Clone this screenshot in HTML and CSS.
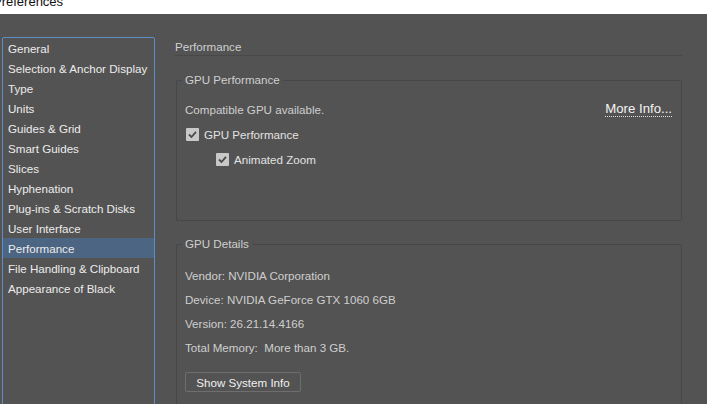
FILE: index.html
```html
<!DOCTYPE HTML>
<html>
    <head>
    <title>Preferences</title>
    <link rel="stylesheet" href="styles.css">
    </head>
    <body>
        <div class="titlebar"><span class="title">Preferences</span></div>

        <div class="window">
            <ul class="sidebar">
                <li>General</li>
                <li>Selection &amp; Anchor Display</li>
                <li>Type</li>
                <li>Units</li>
                <li>Guides &amp; Grid</li>
                <li>Smart Guides</li>
                <li>Slices</li>
                <li>Hyphenation</li>
                <li>Plug-ins &amp; Scratch Disks</li>
                <li>User Interface</li>
                <li class="selected">Performance</li>
                <li>File Handling &amp; Clipboard</li>
                <li>Appearance of Black</li>
            </ul>

            <div class="panel">
                <div class="heading">Performance</div>

                <fieldset class="group group-perf">
                    <legend>GPU Performance</legend>
                    <div class="row">
                        <span>Compatible GPU available.</span>
                        <a class="more">More Info...</a>
                    </div>
                    <label class="row check">
                        <span class="box"><svg width="13" height="13" viewBox="0 0 13 13"><path d="M3 6.5 L5.5 9 L10 3.8" fill="none" stroke="#4a4a4a" stroke-width="1.8"/></svg></span>
                        GPU Performance
                    </label>
                    <label class="row check sub">
                        <span class="box"><svg width="13" height="13" viewBox="0 0 13 13"><path d="M3 6.5 L5.5 9 L10 3.8" fill="none" stroke="#4a4a4a" stroke-width="1.8"/></svg></span>
                        Animated Zoom
                    </label>
                </fieldset>

                <fieldset class="group group-details">
                    <legend>GPU Details</legend>
                    <div class="line">Vendor: NVIDIA Corporation</div>
                    <div class="line">Device: NVIDIA GeForce GTX 1060 6GB</div>
                    <div class="line">Version: 26.21.14.4166</div>
                    <div class="line">Total Memory:&nbsp; More than 3 GB.</div>
                    <button type="button">Show System Info</button>
                </fieldset>
            </div>
        </div>
    </body>
</html>
```

FILE: styles.css
```css
 html, body {
     margin: 0;
     padding: 0;
     height: 404px;
     overflow: hidden;
     background: #535353;
     font-family: "Liberation Sans", Arial, sans-serif;
     font-size: 11.6px;
 }

 .titlebar {
     height: 14px;
     background: #fff;
     overflow: hidden;
 }

 .title {
     display: block;
     margin: -5px 0 0 -7px;
     font-size: 13px;
     line-height: 14px;
     color: #111;
 }

 .window {
     display: flex;
     height: 420px;
     padding-top: 23px;
 }

 .sidebar {
     list-style: none;
     margin: 0 0 0 2px;
     padding: 0;
     width: 151px;
     border: 1px solid #5e8ec6;
     border-radius: 2px;
     color: #ececec;
 }

 .sidebar li {
     height: 20px;
     line-height: 21px;
     padding-left: 5px;
     white-space: nowrap;
 }

 .sidebar li.selected {
     background: #4c6583;
 }

 .panel {
     margin-left: 20px;
     width: 507px;
     color: #cfcfcf;
 }

 .heading {
     margin-top: 2px;
     line-height: 16px;
     border-bottom: 1px solid #484848;
 }

 .group {
     margin: 16px 0 0 1px;
     padding: 9px 9px 0 8px;
     border: 1px solid #474747;
     border-radius: 2px;
 }

 .group legend {
     padding: 0 3px;
     margin-left: -3px;
     line-height: 16px;
 }

 .group-perf {
     height: 138px;
 }

 .row {
     display: flex;
     align-items: center;
     height: 25px;
 }

 .row .more {
     margin-left: auto;
     color: #f4f4f4;
     font-size: 13.2px;
     border-bottom: 1px dotted #e0e0e0;
     line-height: 14px;
 }

 .check {
     color: #e2e2e2;
 }

 .check .box {
     display: inline-block;
     width: 13px;
     height: 13px;
     margin: 0 5px 0 1px;
     background: #c8c8c8;
     border-radius: 1px;
 }

 .check .box svg {
     display: block;
 }

 .sub {
     padding-left: 30px;
 }

 .group-details {
     margin-top: 15px;
     padding-top: 12px;
     height: 200px;
 }

 .line {
     height: 24px;
     line-height: 24px;
 }

 button {
     margin-top: 12px;
     width: 116px;
     height: 20px;
     padding: 0;
     background: #535353;
     border: 1px solid #6e6e6e;
     border-radius: 2px;
     color: #f0f0f0;
     font-family: "Liberation Sans", Arial, sans-serif;
     font-size: 11.6px;
 }
```
